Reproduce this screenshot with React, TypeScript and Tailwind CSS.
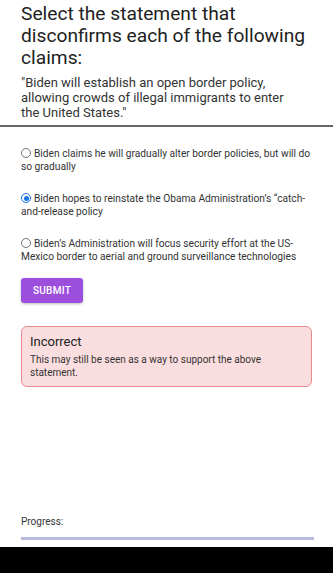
import React from 'react';

const options = [
  { id: 'a', text: 'Biden claims he will gradually alter border policies, but will do so gradually', checked: false },
  { id: 'b', text: 'Biden hopes to reinstate the Obama Administration\u2019s \u201Ccatch-and-release policy', checked: true },
  { id: 'c', text: 'Biden\u2019s Administration will focus security effort at the US-Mexico border to aerial and ground surveillance technologies', checked: false },
];

function Radio({ checked }: { checked: boolean }) {
  if (checked) {
    return (
      <span className="inline-block w-[10px] h-[10px] rounded-full border-[1.5px] border-[#1a73e8] bg-white align-[-1px] mr-[3px] relative">
        <span className="absolute inset-[1.5px] rounded-full bg-[#1a73e8]" />
      </span>
    );
  }
  return <span className="inline-block w-[10px] h-[10px] rounded-full border border-[#767676] bg-white align-[-1px] mr-[3px]" />;
}

export default function App() {
  return (
    <div className="h-[573px] flex flex-col bg-white font-['Roboto',sans-serif] overflow-hidden">
      <div className="px-[21px] pt-[3px]">
        <h1 className="text-[19.2px] leading-[22px] text-[#222]">Select the statement that disconfirms each of the following claims:</h1>
        <p className="mt-[6px] pr-[12px] text-[13px] leading-[15px] text-[#333]">
          "Biden will establish an open border policy, allowing crowds of illegal immigrants to enter the United States."
        </p>
      </div>
      <div className="mt-[5px] h-[2px] bg-[#666]" />

      <div className="px-[21px] pt-[20px] flex flex-col gap-[19px]">
        {options.map((o) => (
          <label key={o.id} className="block text-[10.2px] leading-[13px] text-[#333]">
            <Radio checked={o.checked} />
            {o.text}
          </label>
        ))}
      </div>

      <div className="px-[21px] mt-[14px]">
        <button className="h-[25px] w-[62px] rounded-[3px] bg-[#9c4fdd] text-white text-[10px] font-medium tracking-[0.3px] shadow-[0_1px_3px_rgba(0,0,0,0.25)]">
          SUBMIT
        </button>
      </div>

      <div className="mx-[21px] mt-[23px] h-[61px] rounded-[6px] border border-[#e58b8b] bg-[#fadedf] px-[8px] pt-[7px]">
        <div className="text-[13px] leading-[16px] text-[#222]">Incorrect</div>
        <p className="mt-[3px] pr-[20px] text-[10px] leading-[13px] text-[#333]">This may still be seen as a way to support the above statement.</p>
      </div>

      <div className="flex-1" />

      <div className="px-[21px] pb-[7px]">
        <div className="text-[10px] leading-[13px] text-[#333]">Progress:</div>
        <div className="mt-[9px] mr-[-2px] h-[3px] bg-[#b6badc]" />
      </div>
      <div className="h-[26px] bg-black" />
    </div>
  );
}
